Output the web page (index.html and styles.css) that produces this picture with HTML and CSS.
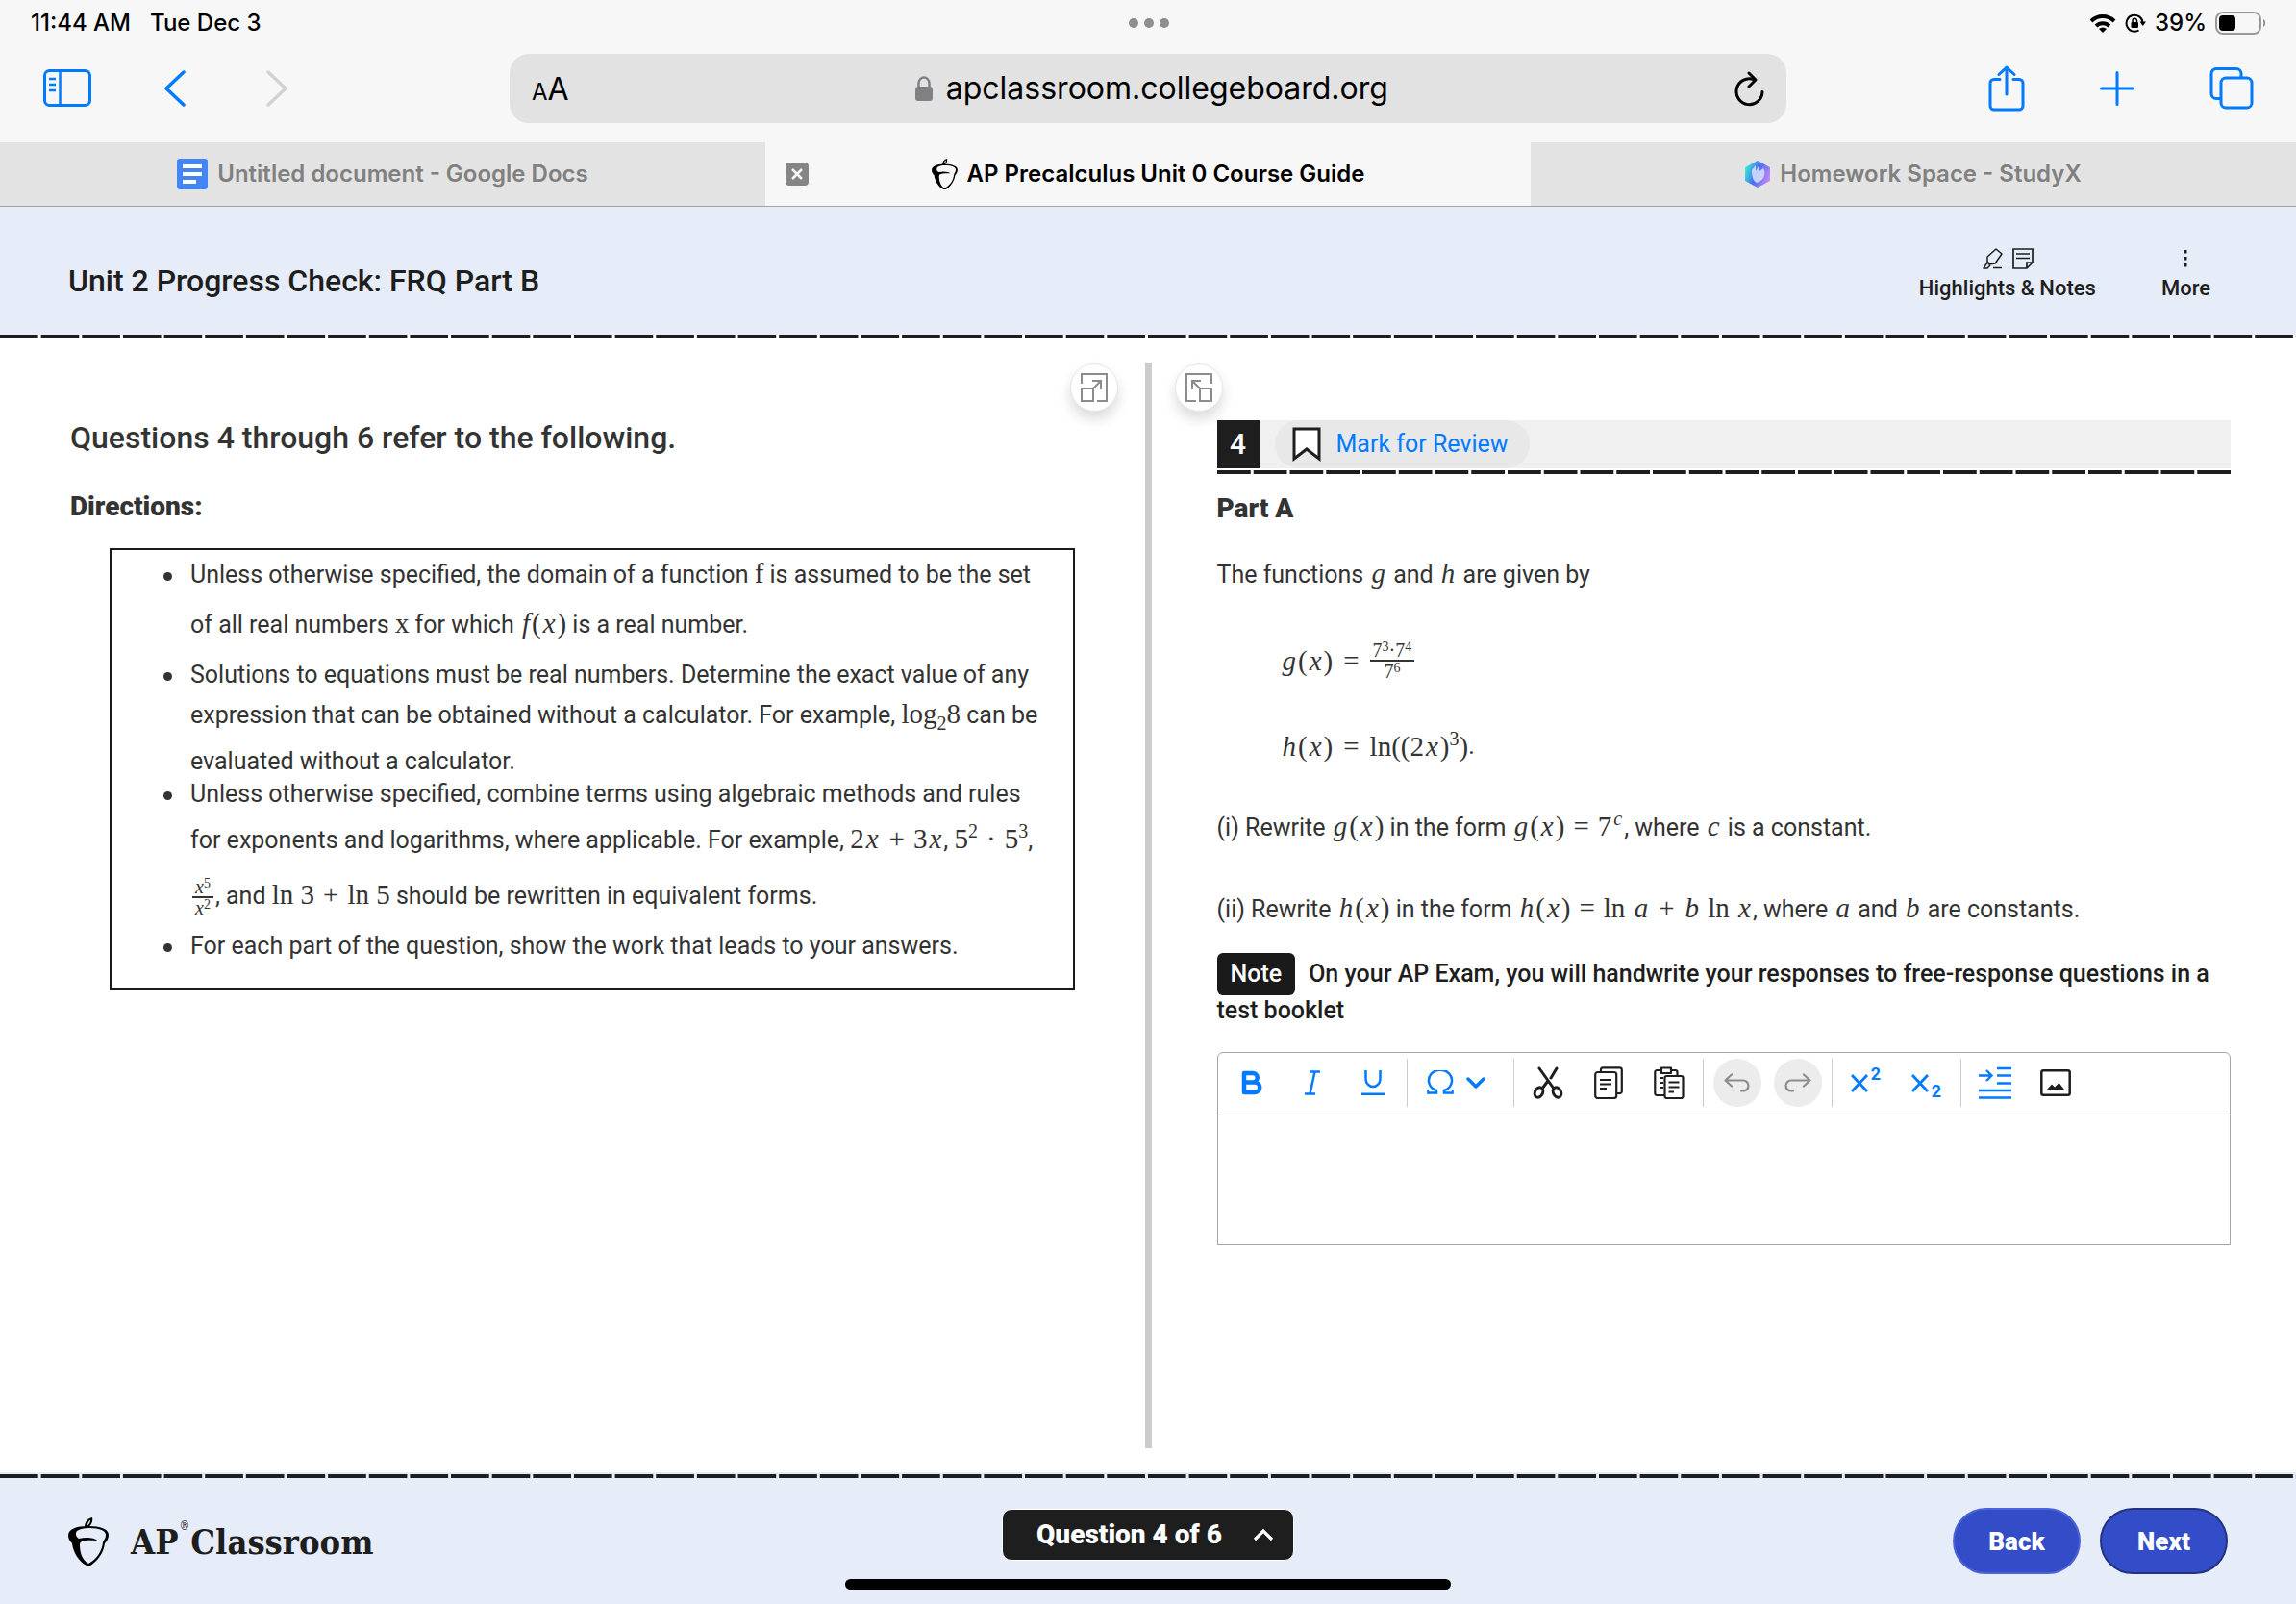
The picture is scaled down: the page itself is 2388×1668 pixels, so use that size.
FILE: index.html
```html
<!DOCTYPE html>
<html lang="en">
<head>
<meta charset="utf-8">
<meta name="viewport" content="width=device-width, initial-scale=1">
<title>AP Precalculus Unit 0 Course Guide</title>
<link rel="stylesheet" href="styles.css">
</head>
<body>
<svg class="defs" aria-hidden="true">
  <symbol id="acorn" viewBox="0 0 42 50">
    <path fill-rule="evenodd" d="M17 10C17 5 20 1 25 0C26 4 24 8 21 10ZM20 8.500C22 7 23 5 23 2.500C21 4 20 6 20 8.500Z"/>
    <path fill-rule="evenodd" d="M21 9C8 9 0 12 0 19C0 22 2 25 4 27C5 36 11 46 19 50H23C31 45 37 36 38 27C40 25 42 22 42 18C42 12 33 9 21 9ZM22 11C33 11 39 14 39 18C39 22 37 23 36 26C35 35 30 43 21 48C14 44 12 36 12 28C12 24 18 23 30 24C28 21 18 20 11 22C8 20 7 17 9 14C12 12 16 11 22 11Z"/>
  </symbol>
</svg>

<header class="browser">
  <div class="status">
    <span class="status-left"><span>11:44 AM</span><span>Tue Dec 3</span></span>
    <span class="dots"><i></i><i></i><i></i></span>
    <span class="status-right">
      <svg width="28" height="20" viewBox="0 0 28 20"><g fill="none" stroke="#000" stroke-width="4"><path d="M2 8A17 17 0 0 1 26 8"/><path d="M7 13A10 10 0 0 1 21 13"/></g><path d="M14 20L10 16A6 6 0 0 1 18 16Z"/></svg>
      <svg width="22" height="20" viewBox="0 0 22 20"><path d="M14.500 17.500A8.500 8.500 0 1 1 18.500 9" fill="none" stroke="#000" stroke-width="2"/><path d="M15.500 8.500H22L18.700 13Z"/><rect x="6.500" y="9" width="7.500" height="6" rx="1"/><path d="M8 9V7.500A2.200 2.200 0 0 1 12.500 7.500V9" fill="none" stroke="#000" stroke-width="1.500"/></svg>
      <span>39%</span>
      <svg width="53" height="24" viewBox="0 0 53 24"><rect x="1" y="1" width="46" height="22" rx="7" fill="none" stroke="#9a9a9a" stroke-width="2"/><rect x="4" y="4" width="17" height="16" rx="4"/><path d="M50 8C53 9 53 15 50 16Z" fill="#9a9a9a"/></svg>
    </span>
  </div>

  <div class="toolbar">
    <div class="tools tools-left">
      <button class="tool" aria-label="Sidebar"><svg width="50" height="40" viewBox="0 0 50 40"><g fill="none" stroke="#007aff" stroke-width="3"><rect x="1.500" y="1.500" width="47" height="36" rx="5"/><path d="M17.500 2V37M6 10H13M6 16H13M6 22H13" stroke-width="2.500"/></g></svg></button>
      <button class="tool" aria-label="Back"><svg width="22" height="38" viewBox="0 0 22 38"><path d="M20 2L2 19L20 36" fill="none" stroke="#007aff" stroke-width="3.500" stroke-linecap="round" stroke-linejoin="round"/></svg></button>
      <button class="tool" aria-label="Forward" disabled><svg width="22" height="38" viewBox="0 0 22 38"><path d="M2 2L20 19L2 36" fill="none" stroke="#d2d2d2" stroke-width="3.500" stroke-linecap="round" stroke-linejoin="round"/></svg></button>
    </div>
    <div class="address">
      <button class="reader" aria-label="Page settings"><small>A</small>A</button>
      <span class="url"><svg width="18" height="26" viewBox="0 0 18 26"><rect y="11" width="18" height="15" rx="3" fill="#808085"/><path d="M3.500 12V7.500A5.500 6 0 0 1 14.500 7.500V12" fill="none" stroke="#808085" stroke-width="2.500"/></svg>apclassroom.collegeboard.org</span>
      <button class="tool" aria-label="Reload"><svg width="32" height="37" viewBox="0 0 32 37"><g fill="none" stroke="#000" stroke-width="3" stroke-linecap="round" stroke-linejoin="round"><path d="M20 8.500A13.500 13.500 0 1 0 29 21.500"/><path d="M15 2L22 9L15 16"/></g></svg></button>
    </div>
    <div class="tools tools-right">
      <button class="tool" aria-label="Share"><svg width="38" height="48" viewBox="0 0 38 48"><g fill="none" stroke="#007aff" stroke-width="3" stroke-linecap="round" stroke-linejoin="round"><path d="M12 14.500H6A4 4 0 0 0 2 18.500V42A4 4 0 0 0 6 46H32A4 4 0 0 0 36 42V18.500A4 4 0 0 0 32 14.500H26M19 30V2M11 9.500L19 2L27 9.500"/></g></svg></button>
      <button class="tool" aria-label="New tab"><svg width="36" height="36" viewBox="0 0 36 36"><path d="M18 1.500V34.500M1.500 18H34.500" stroke="#007aff" stroke-width="3" stroke-linecap="round"/></svg></button>
      <button class="tool" aria-label="Show tabs"><svg width="46" height="44" viewBox="0 0 46 44"><g fill="none" stroke="#007aff" stroke-width="3"><rect x="12" y="11" width="32" height="31" rx="5"/><path d="M12 32.500H7A5 5 0 0 1 2 27.500V6.500A5 5 0 0 1 7 1.500H28A5 5 0 0 1 33 6.500V11"/></g></svg></button>
    </div>
  </div>

  <nav class="tabs">
    <a class="tab" href="#docs"><svg width="32" height="32" viewBox="0 0 32 32"><rect width="32" height="32" rx="3" fill="#4285f4"/><path d="M6 8H26M6 16H26M6 24H20" stroke="#fff" stroke-width="4"/></svg><span>Untitled document - Google Docs</span></a>
    <div class="tab active">
      <button class="close" aria-label="Close tab"><svg width="24" height="24" viewBox="0 0 24 24"><rect width="24" height="24" rx="4" fill="#858585"/><path d="M7 7L17 17M17 7L7 17" stroke="#f7f7f7" stroke-width="2.500"/></svg></button>
      <svg width="27" height="32"><use href="#acorn"/></svg><span>AP Precalculus Unit 0 Course Guide</span>
    </div>
    <a class="tab" href="#studyx"><svg width="26" height="28" viewBox="0 0 26 28"><defs><linearGradient id="sx" x1="0" y1="0.300" x2="1" y2="0.700"><stop offset="0" stop-color="#35f0d0"/><stop offset=".45" stop-color="#4a6cf7"/><stop offset="1" stop-color="#c98bf5"/></linearGradient></defs><path d="M13 0L26 7V21L13 28L0 21V7Z" fill="url(#sx)"/><path d="M7 10L11 5V11L15 4V11L19 8C23 14 18 22 12 23C8 21 7 16 7 10Z" fill="#dfeaff" opacity=".8"/></svg><span>Homework Space - StudyX</span></a>
  </nav>
</header>

<header class="exam-head">
  <h1>Unit 2 Progress Check: FRQ Part B</h1>
  <div class="head-tools">
    <button class="head-tool"><span class="head-icons"><svg width="22" height="22" viewBox="0 0 22 22"><g fill="none" stroke="#1e1e1e" stroke-width="1.500" stroke-linejoin="round"><path d="M15 1L21 6L14 16L8 17L6 15V9ZM6 14L9 17M6 15L2 21H6L9 18M12 20.500H21"/></g></svg><svg width="22" height="22" viewBox="0 0 22 22"><g fill="none" stroke="#1e1e1e" stroke-width="2"><path d="M1 1H21V15L15 21H1ZM15 21V15H21M4 6H18M4 10.500H18" stroke-width="1.700"/></g></svg></span>Highlights &amp; Notes</button>
    <button class="head-tool"><span class="head-icons"><svg width="4" height="18" viewBox="0 0 4 18"><path d="M.500 0h3v3.500h-3zM.500 7h3v3.500h-3zM.500 14h3v3.500h-3z" fill="#1e1e1e"/></svg></span>More</button>
  </div>
</header>
<div class="dashes"></div>

<main class="panes">
  <section class="pane pane-left">
    <button class="expand" aria-label="Expand left pane"><svg width="28" height="30" viewBox="0 0 28 30"><g fill="none" stroke="#8c8c8c" stroke-width="2"><path d="M1 11V1H27V29H17M1 16H13V29H1ZM13 16L21 8M12 8H21V17"/></g></svg></button>
    <div class="stimulus">
      <h2>Questions 4 through 6 refer to the following.</h2>
      <h3>Directions:</h3>
      <ul class="rules">
        <li><span class="line">Unless otherwise specified, the domain of a function <span class="m">f</span> is assumed to be the set</span>
            <span class="line wide">of all real numbers <span class="m">x</span> for which <span class="m"><i>f</i>(<i>x</i>)</span> is a real number.</span></li>
        <li class="wide"><span class="line">Solutions to equations must be real numbers. Determine the exact value of any</span>
            <span class="line tight">expression that can be obtained without a calculator. For example, <span class="m">log<sub>2</sub>8</span> can be</span>
            <span class="line mid">evaluated without a calculator.</span></li>
        <li><span class="line">Unless otherwise specified, combine terms using algebraic methods and rules</span>
            <span class="line mid">for exponents and logarithms, where applicable. For example, <span class="m">2<i>x</i><b>+</b>3<i>x</i></span>, <span class="m">5<sup>2</sup><b>·</b>5<sup>3</sup></span>,</span>
            <span class="line tall"><span class="m frac"><span><i>x</i><sup>5</sup></span><span><i>x</i><sup>2</sup></span></span>, and <span class="m">ln 3<b>+</b>ln 5</span> should be rewritten in equivalent forms.</span></li>
        <li class="wide"><span class="line">For each part of the question, show the work that leads to your answers.</span></li>
      </ul>
    </div>
  </section>
  <div class="divider"></div>
  <section class="pane pane-right">
    <button class="expand" aria-label="Expand right pane"><svg width="28" height="30" viewBox="0 0 28 30"><g fill="none" stroke="#8c8c8c" stroke-width="2"><path d="M27 11V1H1V29H11M15 16H27V29H15ZM15 16L7 8M16 8H7V17"/></g></svg></button>
    <div class="question">
      <div class="q-bar">
        <span class="q-num">4</span>
        <button class="mark"><svg width="30" height="36" viewBox="0 0 30 36"><path d="M2 2H28V33L15 23L2 33Z" fill="#fff" stroke="#1e1e1e" stroke-width="3"/></svg>Mark for Review</button>
      </div>
      <div class="dashes short"></div>
      <h3>Part A</h3>
      <p class="intro">The functions <span class="m"><i>g</i></span> and <span class="m"><i>h</i></span> are given by</p>
      <p class="equation"><span class="m"><i>g</i>(<i>x</i>)<b>=</b></span><span class="m frac"><span>7<sup>3</sup>·7<sup>4</sup></span><span>7<sup>6</sup></span></span></p>
      <p class="equation"><span class="m"><i>h</i>(<i>x</i>)<b>=</b>ln((2<i>x</i>)<sup>3</sup>)</span>.</p>
      <p class="task">(i) Rewrite <span class="m"><i>g</i>(<i>x</i>)</span> in the form <span class="m"><i>g</i>(<i>x</i>)<b>=</b>7<sup><i>c</i></sup></span>, where <span class="m"><i>c</i></span> is a constant.</p>
      <p class="task">(ii) Rewrite <span class="m"><i>h</i>(<i>x</i>)</span> in the form <span class="m"><i>h</i>(<i>x</i>)<b>=</b>ln <i>a</i><b>+</b><i>b</i> ln <i>x</i></span>, where <span class="m"><i>a</i></span> and <span class="m"><i>b</i></span> are constants.</p>
      <p class="note"><span class="badge">Note</span>On your AP Exam, you will handwrite your responses to free-response questions in a test booklet</p>
      <div class="editor">
        <div class="ed-bar">
          <div class="ed-group">
            <button aria-label="Bold"><svg width="22" height="26" viewBox="0 0 22 26"><path d="M3 3H12A4.700 4.700 0 0 1 12 12.500H3ZM3 12.500H14A5 5 0 0 1 14 23H3Z" fill="none" stroke="#007aff" stroke-width="4.500" stroke-linejoin="round"/></svg></button>
            <button aria-label="Italic"><svg width="18" height="26" viewBox="0 0 18 26"><path d="M6 1.500H17M1 24.500H12M11.500 1.500L6.500 24.500" stroke="#007aff" stroke-width="2.500"/></svg></button>
            <button aria-label="Underline"><svg width="24" height="26" viewBox="0 0 24 26"><path d="M4.500 0V9A7.500 8 0 0 0 19.500 9V0M0 24.700H24" fill="none" stroke="#007aff" stroke-width="2.500"/></svg></button>
          </div>
          <div class="ed-group">
            <button class="menu" aria-label="Special characters"><svg width="28" height="26" viewBox="0 0 28 26"><path d="M1 23.500H10V21A12 11 0 1 1 18 21V23.500H27" fill="none" stroke="#007aff" stroke-width="2.500"/><path d="M1.200 20V24.700M26.800 20V24.700" stroke="#007aff" stroke-width="2"/></svg><svg width="20" height="14" viewBox="0 0 20 14"><path d="M2 3L10 11L18 3" fill="none" stroke="#007aff" stroke-width="3.500" stroke-linecap="round" stroke-linejoin="round"/></svg></button>
          </div>
          <div class="ed-group">
            <button aria-label="Cut"><svg width="32" height="34" viewBox="0 0 32 34"><g fill="none" stroke="#1e1e1e" stroke-width="3" stroke-linecap="round"><path d="M7 2L22 23M25 2L19 12M16 15L10 23"/><ellipse cx="6.500" cy="27" rx="4" ry="5.500" transform="rotate(25 6.500 27)"/><ellipse cx="25.500" cy="27" rx="4" ry="5.500" transform="rotate(-25 25.500 27)"/></g></svg></button>
            <button aria-label="Copy"><svg width="30" height="34" viewBox="0 0 30 34"><g fill="none" stroke="#1e1e1e" stroke-width="2.200" stroke-linejoin="round"><rect x="1.200" y="6" width="22" height="27" rx="2.500"/><path d="M7 6V3.500A2 2 0 0 1 9 1.300H26.500A2.200 2.200 0 0 1 28.800 3.500V26A2 2 0 0 1 26.500 28H23.500M6 14H18M6 18.500H18M6 23H13"/></g></svg></button>
            <button aria-label="Paste"><svg width="32" height="34" viewBox="0 0 32 34"><g fill="none" stroke="#1e1e1e" stroke-width="2.200" stroke-linejoin="round"><path d="M11 30H3.500A2 2 0 0 1 1.300 28V6A2 2 0 0 1 3.500 4H8M18 4H22.500A2 2 0 0 1 24.500 6V9M8 1.500H18V7H8ZM6 12H10M6 17H10M6 22H10"/><rect x="11.500" y="10" width="19" height="23" rx="2"/><path d="M15.500 16.500H26.500M15.500 21.500H26.500M15.500 26.500H21"/></g></svg></button>
          </div>
          <div class="ed-group">
            <button class="off" aria-label="Undo" disabled><svg width="28" height="20" viewBox="0 0 28 20"><path d="M8 1.500L1.500 7.500L8 13.500M2 7.500H20A5.500 5.500 0 0 1 20 18.500H18" fill="none" stroke="#8c8c8c" stroke-width="2.200" stroke-linecap="round" stroke-linejoin="round"/></svg></button>
            <button class="off" aria-label="Redo" disabled><svg width="28" height="20" viewBox="0 0 28 20"><path d="M20 1.500L26.500 7.500L20 13.500M26 7.500H7A5.500 5.500 0 0 0 7 18.500H9" fill="none" stroke="#8c8c8c" stroke-width="2.200" stroke-linecap="round" stroke-linejoin="round"/></svg></button>
          </div>
          <div class="ed-group">
            <button class="script" aria-label="Superscript"><svg width="18" height="19" viewBox="0 0 18 19"><path d="M1 1L17 18M17 1L1 18" stroke="#007aff" stroke-width="2.800"/></svg><span class="up">2</span></button>
            <button class="script" aria-label="Subscript"><svg width="18" height="19" viewBox="0 0 18 19"><path d="M1 1L17 18M17 1L1 18" stroke="#007aff" stroke-width="2.800"/></svg><span class="down">2</span></button>
          </div>
          <div class="ed-group">
            <button aria-label="Indent"><svg width="34" height="34" viewBox="0 0 34 34"><path d="M19 2H34M19 9.500H34M19 17.500H34M0 25H34M0 32.500H34M0 9.500H13M8 4L13.500 9.500L8 15" fill="none" stroke="#007aff" stroke-width="2.400"/></svg></button>
            <button aria-label="Insert image"><svg width="32" height="28" viewBox="0 0 32 28"><rect x="1.300" y="1.300" width="29.400" height="25.400" rx="2" fill="none" stroke="#1e1e1e" stroke-width="2.500"/><path d="M7 21L12 15.500L15 18.500L19.500 14L25 21Z" fill="#1e1e1e"/></svg></button>
          </div>
        </div>
        <textarea aria-label="Your response"></textarea>
      </div>
    </div>
  </section>
</main>

<footer class="exam-foot">
  <div class="dashes"></div>
  <div class="foot-row">
    <a class="brand" href="#home"><svg width="42" height="50"><use href="#acorn"/></svg><span>AP<sup>®</sup>Classroom</span></a>
    <button class="picker">Question 4 of 6<svg width="22" height="14" viewBox="0 0 22 14"><path d="M2 12L11 3L20 12" fill="none" stroke="#fff" stroke-width="3.200"/></svg></button>
    <div class="moves"><button class="move">Back</button><button class="move next">Next</button></div>
  </div>
  <div class="home-bar"></div>
</footer>
</body>
</html>
```
FILE: styles.css
```css
* { box-sizing: border-box; margin: 0; padding: 0; }

body {
  min-height: 100vh;
  display: flex;
  flex-direction: column;
  background: #fff;
  color: #333;
  font: 25px/34px Roboto, "Liberation Sans", sans-serif;
}

button {
  border: 0;
  background: none;
  color: inherit;
  font: inherit;
  display: flex;
  align-items: center;
  justify-content: center;
}

a { color: inherit; text-decoration: none; }
svg { display: block; flex: none; }
.defs { position: absolute; width: 0; height: 0; }

/* Browser chrome */
.browser {
  background: #f7f7f7;
  border-bottom: 1px solid #a1a5ac;
  color: #000;
  font-family: Inter, "Liberation Sans", sans-serif;
}

.status {
  height: 48px;
  padding: 0 31px 0 32px;
  display: grid;
  grid-template-columns: 1fr auto 1fr;
  align-items: center;
  font-size: 24px;
  line-height: 28px;
  font-weight: 500;
}
.status-left { display: flex; gap: 20px; }
.status-right { display: flex; align-items: center; justify-content: flex-end; gap: 9px; }
.dots { display: flex; gap: 6px; }
.dots i { width: 10px; height: 10px; border-radius: 50%; background: #8f8f8f; }

.toolbar {
  height: 100px;
  padding: 8px 44px 20px;
  display: grid;
  grid-template-columns: 1fr 1328px 1fr;
  align-items: center;
}
.tools { display: flex; align-items: center; }
.tools-left { padding-left: 1px; gap: 76px; }
.tools-left .tool + .tool + .tool { margin-left: 8px; }
.tools-right { justify-content: flex-end; gap: 78px; }
.address {
  height: 72px;
  padding: 0 22px 0 23px;
  border-radius: 20px;
  background: #e2e2e2;
  display: flex;
  align-items: center;
  justify-content: space-between;
}
.reader { padding-top: 4px; align-items: baseline; font-size: 32px; line-height: 40px; }
.reader small { font-size: 24px; }
.url { display: flex; align-items: center; gap: 14px; font-size: 32px; line-height: 40px; }

.tabs {
  display: grid;
  grid-template-columns: repeat(3, 1fr);
  font-size: 24px;
  line-height: 28px;
  font-weight: 600;
}
.tab {
  position: relative;
  height: 66px;
  display: flex;
  align-items: center;
  justify-content: center;
  gap: 10px;
  background: #e3e3e3;
  color: #808080;
}
.tab.active { background: #f7f7f7; color: #000; }
.close { position: absolute; left: 21px; }

/* Exam header */
.exam-head {
  height: 133px;
  padding: 20px 69px 0 71px;
  display: flex;
  align-items: center;
  justify-content: space-between;
  background: #e6ecf8;
  color: #1e1e1e;
}
.exam-head h1 { font-size: 32px; line-height: 38px; font-weight: 500; }
.head-tools { display: flex; gap: 68px; padding: 0 20px 14px 0; }
.head-tool { flex-direction: column; gap: 6px; font-size: 22px; line-height: 26px; font-weight: 500; }
.head-icons { height: 24px; display: flex; align-items: center; gap: 10px; }

.dashes {
  height: 4px;
  background: linear-gradient(90deg, #1e1e1e 92%, transparent 92%) 0 0 / 43px 4px round;
}
.dashes.short { background-size: 38px 4px; margin: 2px -3px 0 0; }

/* Panes */
.panes {
  flex: 1;
  display: grid;
  grid-template-columns: 1fr 7px 1fr;
}
.divider { margin: 25px 0; background: #ccc; }
.pane { padding: 26px 28px 25px 24px; display: flex; flex-direction: column; }
.pane-left { align-items: flex-end; }
.pane-right { align-items: flex-start; }
.expand {
  width: 50px;
  height: 50px;
  border: 1px solid #e6e6e6;
  border-radius: 50%;
  background: #fff;
  box-shadow: 0 8px 14px rgba(0, 0, 0, .14);
}
.stimulus { align-self: stretch; margin: 8px 45px 0 49px; }
.question { align-self: stretch; margin: 9px 40px 0 44px; }

h2 { font-size: 32px; line-height: 38px; font-weight: 500; }
h3 { font-size: 28px; line-height: 30px; font-weight: 900; }
.stimulus h3 { margin-top: 38px; }

.rules {
  margin: 28px 0 0 41px;
  padding: 9px 18px 26px 82px;
  border: 2px solid #1a1a1a;
  list-style: none;
  white-space: nowrap;
}
.rules li { position: relative; }
.rules li::before {
  content: "";
  position: absolute;
  left: -28px;
  top: 14px;
  width: 9px;
  height: 9px;
  border-radius: 50%;
  background: #333;
}
.line { display: block; }
.tight { margin-top: 8px; }
.mid { margin-top: 14px; }
.wide { margin-top: 18px; }
.tall { margin-top: 24px; }

/* Formulas */
.m {
  font-family: "Liberation Serif", serif;
  font-size: 29px;
  line-height: 1px;
  white-space: nowrap;
}
.m i { margin: 0 2px; }
.m b { font-weight: 400; margin: 0 9px; }
.m sub, .m sup { font-size: 20px; line-height: 1px; }
.frac {
  display: inline-flex;
  flex-direction: column;
  margin: -6px 2px;
  vertical-align: middle;
  font-size: 20px;
  line-height: 20px;
  text-align: center;
}
.frac i { margin: 0; }
.m.frac sup { font-size: 14px; vertical-align: 6px; }
.frac > span { padding: 0 3px; }
.frac > span + span { border-top: 2px solid #333; }

/* Question */
.q-bar { height: 50px; display: flex; gap: 16px; background: #f0f0f0; }
.q-num {
  width: 44px;
  background: #1e1e1e;
  color: #fff;
  font-size: 30px;
  line-height: 50px;
  font-weight: 500;
  text-align: center;
}
.mark { padding: 0 22px 0 18px; gap: 16px; border-radius: 25px; background: #e8e8e8; color: #007aff; }
.question h3 { margin-top: 21px; }
.intro { margin-top: 37px; }
.equation { height: 34px; margin-top: 55px; padding-left: 66px; display: flex; align-items: center; }
.equation .m { line-height: 34px; }
.equation .m b { margin: 0 11px; }
.equation .m.frac { margin: 0; line-height: 20px; }
.task { margin-top: 51px; }
.note { margin-top: 31px; line-height: 38px; font-weight: 500; color: #1e1e1e; }
.badge {
  display: inline-block;
  margin: -6px 14px -6px 0;
  padding: 7px 14px;
  border-radius: 6px;
  background: #1a1a1a;
  color: #fff;
  line-height: 30px;
}

.editor { margin-top: 24px; border: 1px solid #a6a6a6; border-radius: 6px 6px 0 0; }
.ed-bar { height: 65px; padding-bottom: 2px; display: flex; align-items: center; border-bottom: 1px solid #a6a6a6; }
.ed-group { height: 50px; padding: 0 10px; display: flex; align-items: center; gap: 13px; }
.ed-group + .ed-group { border-left: 1px solid #ccc; }
.ed-group button { width: 50px; height: 50px; border-radius: 50%; }
.ed-group .menu { width: 90px; padding-left: 10px; gap: 13px; justify-content: flex-start; }
.ed-group .off { background: #ececec; }
.ed-group .script { gap: 3px; color: #007aff; font-size: 18px; line-height: 20px; font-weight: 700; }
.up { padding-bottom: 18px; }
.down { padding-top: 18px; }
.editor textarea { display: block; width: 100%; height: 134px; padding: 12px; border: 0; resize: none; font: inherit; color: inherit; }

/* Exam footer */
.exam-foot { position: relative; padding-top: 2px; background: #e6ecf8; color: #1e1e1e; }
.foot-row {
  height: 131px;
  padding: 0 71px;
  display: grid;
  grid-template-columns: 1fr auto 1fr;
  align-items: center;
}
.brand { display: flex; align-items: center; gap: 23px; font: 700 36px/44px "DejaVu Serif Condensed", "DejaVu Serif", serif; }
.brand sup { padding: 0 1px; font-size: 12px; font-weight: 400; line-height: 12px; vertical-align: top; }
.picker {
  width: 304px;
  height: 54px;
  margin-bottom: 14px;
  padding: 0 20px 0 35px;
  justify-content: space-between;
  border: 1px solid #fff;
  border-radius: 10px;
  background: #1e1e1e;
  color: #fff;
  font-size: 28px;
  font-weight: 900;
}
.moves { display: flex; justify-content: flex-end; gap: 20px; }
.move {
  width: 133px;
  height: 69px;
  border: 2px solid #4c63d8;
  border-radius: 35px;
  background: #324dc7;
  color: #fff;
  font-size: 26px;
  font-weight: 900;
}
.move.next { border-color: #24337f; }
.home-bar {
  position: absolute;
  left: 50%;
  bottom: 15px;
  width: 630px;
  height: 11px;
  margin-left: -315px;
  border-radius: 6px;
  background: #000;
}
```
